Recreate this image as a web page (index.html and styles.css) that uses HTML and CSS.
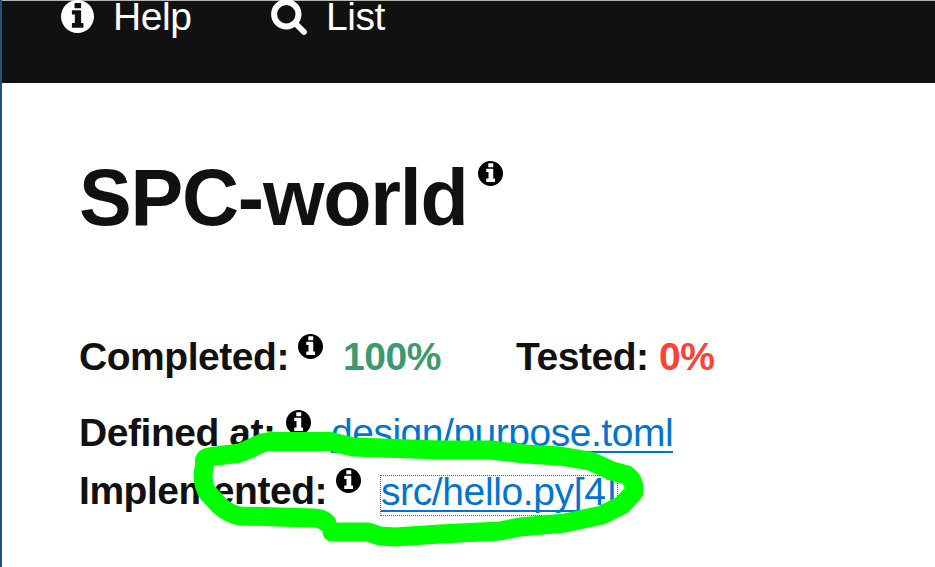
FILE: index.html
```html
<!DOCTYPE html>
<html lang="en">
<head>
<meta charset="utf-8">
<title>SPC-world</title>
<link rel="stylesheet" href="styles.css">
</head>
<body>
<svg class="defs" aria-hidden="true">
  <symbol id="info" viewBox="0 0 100 100"><path fill-rule="evenodd" d="M50 0a50 50 0 1 1 0 100a50 50 0 1 1 0-100zM43 9q-2 0-2 2v12q0 2 2 2h16q2 0 2-2v-12q0-2-2-2zM35 31q-2 0-2 2v9q0 2 2 2h7v26h-7q-2 0-2 2v10q0 2 2 2h31q2 0 2-2v-10q0-2-2-2h-5v-37q0-2-2-2z"/></symbol>
  <symbol id="search" viewBox="0 0 36 36"><circle cx="15.300" cy="15.300" r="12.200" fill="none" stroke="currentColor" stroke-width="6"/><path d="M24.500 24.500L33 33" stroke="currentColor" stroke-width="5.800" stroke-linecap="round"/></symbol>
</svg>
<div class="page">
  <nav class="bar">
    <a class="item help"><svg class="help-icon"><use href="#info"/></svg>Help</a>
    <a class="item list"><svg class="search-icon"><use href="#search"/></svg>List</a>
  </nav>
  <main class="content">
    <h1 class="title"><span class="name">SPC-world</span><svg class="info"><use href="#info"/></svg></h1>
    <div class="row status">
      <b class="completed">Completed:</b><svg class="info"><use href="#info"/></svg><b class="good">100%</b>
      <b class="tested">Tested:</b><b class="bad">0%</b>
    </div>
    <div class="row">
      <b class="defined">Defined at:</b><svg class="info"><use href="#info"/></svg><a class="link">design/purpose.toml</a>
    </div>
    <div class="row">
      <b class="implemented">Implemented:</b><svg class="info"><use href="#info"/></svg><a class="link focused">src/hello.py[4]</a>
    </div>
  </main>
  <svg class="marker" viewBox="0 0 935 567"><path d="M327 523 Q322 518 314 518 L278 517 L240 516 Q229 514 220 506 L208 493 Q203 487 203 474 L205 463 Q203 458 209 457 L240 453 Q250 449 262 443 L270 441.500 H330 L353 447 L440 450 H490 L525 454 L560 456 L590 461 Q604 467 612 471 L627 475 Q635 481 634 492 L622 505 L602 515 L565 523 L520 527 L500 531 L440 534 L395 537 L380 536 L368 532 L332 532"/></svg>
</div>
</body>
</html>
```
FILE: styles.css
```css
* { box-sizing: border-box; }
body {
  margin: 0;
  overflow: hidden;
  background: #fff;
  color: #111;
  font: 39px/58px "Liberation Sans", sans-serif;
  letter-spacing: -0.45px;
}
svg { display: block; flex: none; fill: currentColor; }
.defs { position: absolute; width: 0; height: 0; }
.page { position: relative; height: 567px; border-left: 2px solid #25527a; }
.bar {
  display: flex;
  height: 83px;
  padding-left: 59px;
  background: #111;
  border-top: 1px solid #b4b6ae;
  color: #fff;
}
.item { display: flex; height: 32px; line-height: 32px; }
.help { width: 210px; }
.help-icon { width: 33px; height: 33px; margin: -1px 19px 0 0; }
.search-icon { width: 36px; height: 36px; margin: -2px 19px 0 0; }
.content { padding: 70px 0 0 77px; }
.title { display: flex; height: 90px; margin: 0 0 85px; font-size: 79px; line-height: 90px; letter-spacing: -1.2px; }
.name { width: 399px; white-space: nowrap; }
.title .info { margin: 8px 0 0; }
.info { width: 25px; height: 25px; margin: 6px 20px 0 10px; color: #000; }
.row { display: flex; height: 58px; white-space: nowrap; }
.status { margin-bottom: 18px; }
.completed { width: 209px; }
.defined { width: 197px; }
.implemented { width: 247px; }
.good { width: 173px; color: #3d9970; }
.tested { width: 143px; }
.bad { color: #ff4136; }
.link { height: 49px; border-bottom: 2px solid #0075cf; color: #0075cf; }
.link:not(.focused) { letter-spacing: -0.48px; }
.focused { height: 41px; margin: 13px 0 0 -1px; line-height: 31px; padding: 0 1px 0 0; border: 1px dotted #0075cf; letter-spacing: -0.38px; text-decoration: underline 2px; text-underline-offset: 5px; text-decoration-skip-ink: none; }
.marker { position: absolute; left: -2px; top: 0; width: 935px; height: 567px; pointer-events: none; }
.marker path { fill: none; stroke: #0f0; stroke-width: 19; stroke-linecap: round; stroke-linejoin: round; }
```
